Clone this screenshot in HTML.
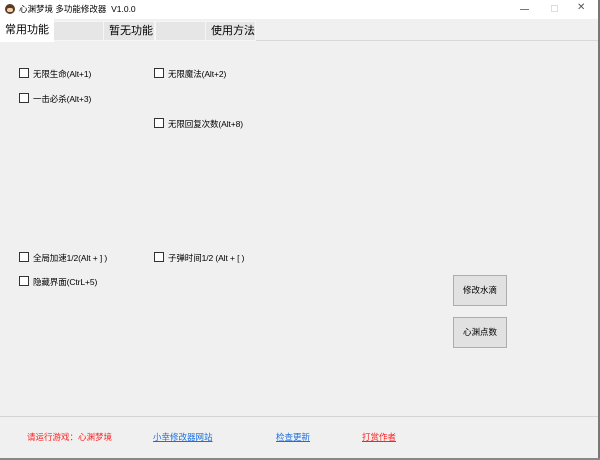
<!DOCTYPE html><html><head><meta charset="utf-8"><style>
*{margin:0;padding:0;box-sizing:border-box}
body{width:600px;height:460px;background:#f0f0f0;font-family:"Liberation Sans","Noto Sans CJK SC",sans-serif;position:relative;overflow:hidden;font-size:8.5px;color:#000}
.abs{position:absolute}
.title{left:0;top:0;width:598px;height:19px;background:#fff;}
.tabs{left:0;top:19px;width:598px;height:22px;background:#f0f0f0;border-bottom:1px solid #d9d9d9}
.tab{position:absolute;top:2px;height:20px;background:#e6e6e6;border:1px solid #f6f6f6;font-size:11px;line-height:19px;padding-left:5px}
.cb{position:absolute;font-size:8.5px;line-height:10px;letter-spacing:-0.1px}
.cb:before{content:"";display:inline-block;width:8px;height:8px;border:1px solid #333;background:#fff;vertical-align:-1px;margin-right:4px}
.btn{position:absolute;width:54px;height:31px;background:#e1e1e1;border:1px solid #adadad;font-size:8.5px;text-align:center;line-height:29px}
a{position:absolute;font-size:8.5px;text-decoration:underline}
</style></head><body>
<div class="abs title">
 <div class="abs" style="left:5px;top:4px;width:10px;height:10px;border-radius:50%;background:#5a3a22"></div>
 <div class="abs" style="left:7px;top:8px;width:6px;height:4px;border-radius:2px;background:#f2d0a8"></div>
 <div class="abs" style="left:19px;top:3px;font-size:8.5px">心渊梦境 多功能修改器&nbsp; V1.0.0</div>
 <div class="abs" style="left:520px;top:9px;width:9px;height:1px;background:#777"></div>
 <div class="abs" style="left:551px;top:5px;width:7px;height:7px;border:1px solid #ddd"></div>
 <div class="abs" style="left:577px;top:2px;font-size:10px;color:#555">✕</div>
</div>
<div class="abs" style="left:598px;top:0;width:2px;height:460px;background:#777"></div>
<div class="abs tabs">
 <div class="tab" style="left:53px;width:51px"></div>
 <div class="tab" style="left:103px;width:52px">暂无功能</div>
 <div class="tab" style="left:155px;width:51px"></div>
 <div class="tab" style="left:205px;width:51px">使用方法</div>
 <div class="tab" style="left:0;top:0;height:23px;width:54px;background:#fff;border:none;line-height:22px">常用功能</div>
</div>
<div class="cb" style="left:19px;top:68px">无限生命(Alt+1)</div>
<div class="cb" style="left:154px;top:68px">无限魔法(Alt+2)</div>
<div class="cb" style="left:19px;top:93px">一击必杀(Alt+3)</div>
<div class="cb" style="left:154px;top:118px">无限回复次数(Alt+8)</div>
<div class="cb" style="left:19px;top:252px">全局加速1/2(Alt + ] )</div>
<div class="cb" style="left:154px;top:252px">子弹时间1/2 (Alt + [ )</div>
<div class="cb" style="left:19px;top:276px">隐藏界面(CtrL+5)</div>
<div class="btn" style="left:453px;top:275px">修改水滴</div>
<div class="btn" style="left:453px;top:317px">心渊点数</div>
<div class="abs" style="left:0;top:416px;width:598px;height:1px;background:#d4d4d4"></div>
<div class="abs" style="left:27px;top:431px;color:#ff2020">请运行游戏：心渊梦境</div>
<a style="left:153px;top:431px;color:#1a6fe0">小幸修改器网站</a>
<a style="left:276px;top:431px;color:#1a6fe0">检查更新</a>
<a style="left:362px;top:431px;color:#ff2020">打赏作者</a>
<div class="abs" style="left:0;top:458px;width:600px;height:2px;background:#888"></div>
</body></html>
